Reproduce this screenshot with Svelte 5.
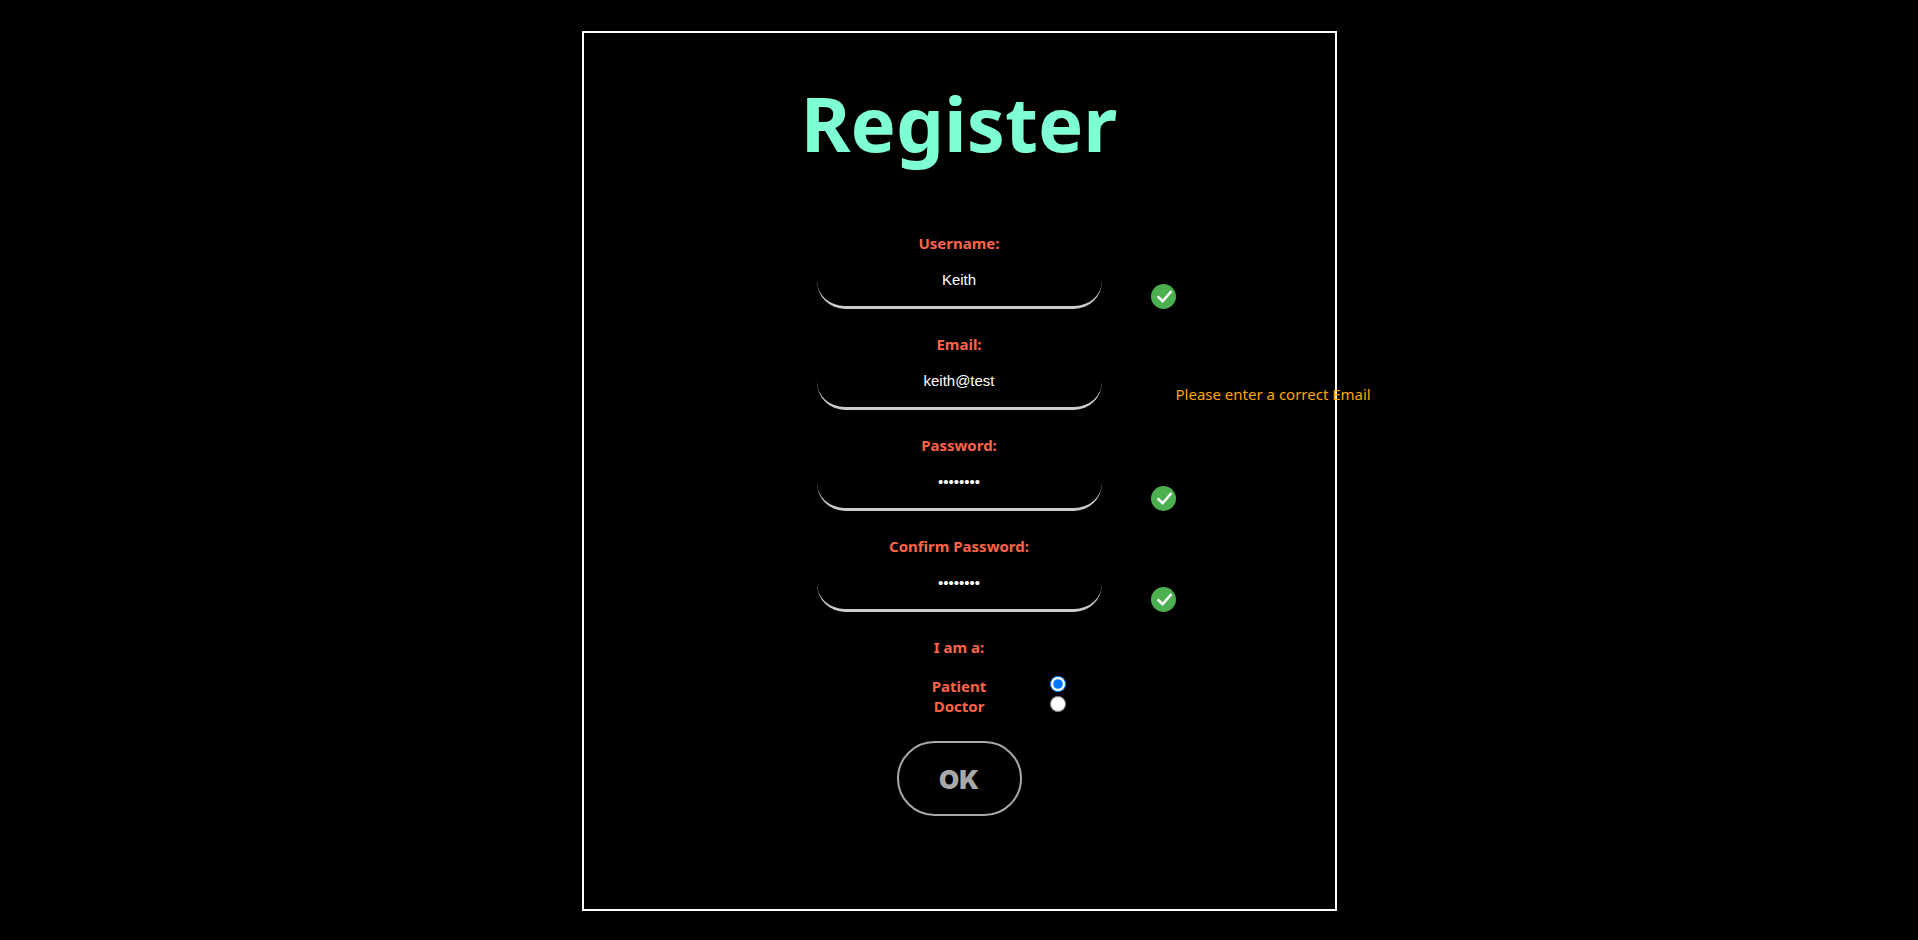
<script>
  let fields = $state([
    { id: 'username', label: 'Username:', type: 'text', value: 'Keith', error: '' },
    { id: 'email', label: 'Email:', type: 'text', value: 'keith@test', error: 'Please enter a correct Email' },
    { id: 'password', label: 'Password:', type: 'password', value: 'password', error: '' },
    { id: 'confirm', label: 'Confirm Password:', type: 'password', value: 'password', error: '' }
  ]);
  let role = $state('Patient');
</script>

<main>
  <form onsubmit={(e) => e.preventDefault()}>
    <h1>Register</h1>

    {#each fields as field (field.id)}
      <div class="field">
        <label for={field.id}>{field.label}</label>
        <input class="entry" id={field.id} type={field.type} bind:value={field.value} autocomplete="off" />
        {#if field.error}
          <span class="error">{field.error}</span>
        {:else}
          <svg class="valid" viewBox="0 0 25 25" aria-hidden="true">
            <circle cx="12.5" cy="12.5" r="12.5" fill="#4caf50" />
            <path d="M7.5 13.2 11.6 17.2 19.6 8" fill="none" stroke="#fff" stroke-width="2.5" stroke-linecap="square" />
          </svg>
        {/if}
      </div>
    {/each}

    <fieldset>
      <legend>I am a:</legend>
      {#each ['Patient', 'Doctor'] as option}
        <div class="option">
          <label for={option}>{option}</label>
          <input id={option} type="radio" name="role" value={option} bind:group={role} />
        </div>
      {/each}
    </fieldset>

    <button type="submit">OK</button>
  </form>
</main>

<style>
  :global(body) {
    background: #000;
  }

  main {
    display: flex;
    justify-content: center;
    padding: 31px 16px 28px;
    font: 15px/20px "Segoe UI", "Noto Sans", sans-serif;
    color: tomato;
  }

  form {
    box-sizing: border-box;
    display: flex;
    flex-direction: column;
    align-items: center;
    width: 100%;
    max-width: 755px;
    padding: 36px 0 93px;
    border: 2px solid #fff;
  }

  h1 {
    margin: 0 0 56px;
    font-size: 76px;
    line-height: 108px;
    color: aquamarine;
  }

  .field {
    display: grid;
    grid-template-columns: minmax(0, 1fr) 285px minmax(0, 1fr);
    align-self: stretch;
    margin-bottom: 25px;
  }

  label,
  legend {
    font-weight: 700;
    text-align: center;
  }

  .field label,
  .entry {
    grid-column: 2;
  }

  .entry {
    box-sizing: border-box;
    width: 100%;
    height: 56px;
    padding: 0 16px;
    border: 0;
    border-bottom: 3px solid #ccc;
    border-radius: 28px;
    outline: 0;
    background: transparent;
    color: #fff;
    font: 15px "Liberation Sans", Arial, sans-serif;
    text-align: center;
  }

  .valid {
    grid-column: 3;
    align-self: end;
    width: 25px;
    height: 25px;
    margin-left: 49px;
  }

  .error {
    grid-column: 3;
    align-self: end;
    margin: 0 0 6px 74px;
    white-space: nowrap;
    color: orange;
  }

  fieldset {
    align-self: stretch;
    margin: 0 0 25px;
    padding: 0;
    border: 0;
  }

  legend {
    width: 100%;
    margin-bottom: 19px;
    padding: 0;
  }

  .option {
    display: grid;
    grid-template-columns: 1fr 90px 1fr;
    align-items: start;
  }

  .option label {
    grid-column: 2;
  }

  .option input {
    width: 16px;
    height: 16px;
    margin: 0 0 0 46px;
  }

  button {
    width: 125px;
    height: 75px;
    padding: 2px 0 0;
    border: 2px solid darkgray;
    border-radius: 38px;
    background: transparent;
    color: darkgray;
    font: 900 26px "Arial Black", Inter, sans-serif;
  }
</style>
